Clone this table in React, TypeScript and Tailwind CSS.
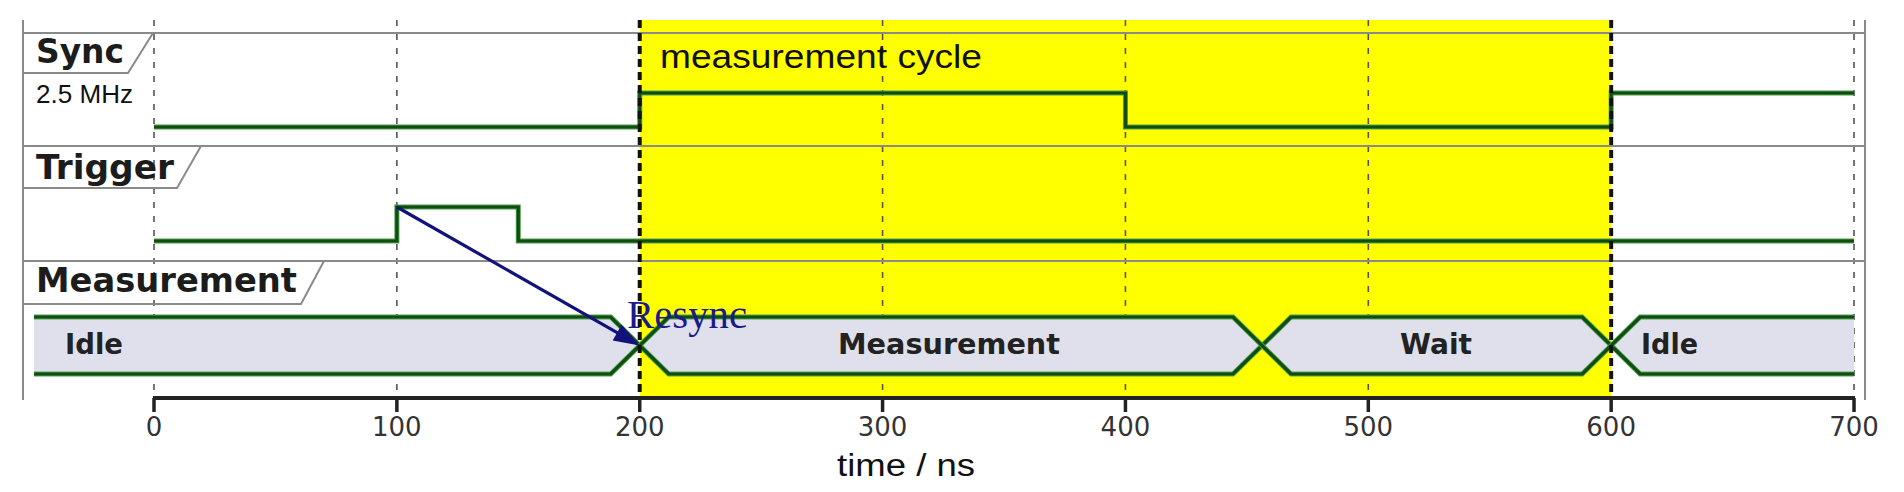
import React from "react";

// time (ns) -> x pixel
const X0 = 154;
const PX_PER_NS = 2.4286;
const tx = (t: number) => X0 + t * PX_PER_NS;

const GRID_THIN = [0, 100, 300, 400, 500, 700];
const GRID_BOLD = [200, 600];
const TICKS = [0, 100, 200, 300, 400, 500, 600, 700];

const ROW_LINES = [33, 146, 261];

const LABELS = [
  { text: "Sync", y: 33, bottom: 73, slantBottom: 128, slantTop: 153, baseline: 63, width: 88 },
  { text: "Trigger", y: 146, bottom: 188, slantBottom: 177, slantTop: 201, baseline: 179, width: 138 },
  { text: "Measurement", y: 261, bottom: 304, slantBottom: 301, slantTop: 324, baseline: 292, width: 261 },
];

// bus geometry
const BT = 317;
const BB = 374;
const BM = (BT + BB) / 2;
const H = 29;
const C1 = tx(200);
const C2 = 1262;
const C3 = tx(600);
const BUS_START = 34;
const BUS_END = tx(700);

const BUS_FILLS = [
  `${BUS_START},${BT} ${C1 - H},${BT} ${C1},${BM} ${C1 - H},${BB} ${BUS_START},${BB}`,
  `${C1},${BM} ${C1 + H},${BT} ${C2 - H},${BT} ${C2},${BM} ${C2 - H},${BB} ${C1 + H},${BB}`,
  `${C2},${BM} ${C2 + H},${BT} ${C3 - H},${BT} ${C3},${BM} ${C3 - H},${BB} ${C2 + H},${BB}`,
  `${C3},${BM} ${C3 + H},${BT} ${BUS_END},${BT} ${BUS_END},${BB} ${C3 + H},${BB}`,
];

const BUS_LINE_A = `${BUS_START},${BT} ${C1 - H},${BT} ${C1 + H},${BB} ${C2 - H},${BB} ${C2 + H},${BT} ${C3 - H},${BT} ${C3 + H},${BB} ${BUS_END},${BB}`;
const BUS_LINE_B = `${BUS_START},${BB} ${C1 - H},${BB} ${C1 + H},${BT} ${C2 - H},${BT} ${C2 + H},${BB} ${C3 - H},${BB} ${C3 + H},${BT} ${BUS_END},${BT}`;

const SYNC_HI = 93;
const SYNC_LO = 127;
const SYNC = `${tx(0)},${SYNC_LO} ${tx(200)},${SYNC_LO} ${tx(200)},${SYNC_HI} ${tx(400)},${SYNC_HI} ${tx(400)},${SYNC_LO} ${tx(600)},${SYNC_LO} ${tx(600)},${SYNC_HI} ${tx(700)},${SYNC_HI}`;

const TRG_HI = 207;
const TRG_LO = 241;
const TRIGGER = `${tx(0)},${TRG_LO} ${tx(100)},${TRG_LO} ${tx(100)},${TRG_HI} ${tx(150)},${TRG_HI} ${tx(150)},${TRG_LO} ${tx(700)},${TRG_LO}`;

const DEJAVU = "'DejaVu Sans', Verdana, sans-serif";
const ARIAL = "'Liberation Sans', Arial, sans-serif";
const TIMES = "'Liberation Serif', 'Times New Roman', serif";

function Wave({ points }: { points: string }) {
  return (
    <g fill="none" strokeLinejoin="miter">
      <polyline points={points} stroke="#4f9f4f" strokeWidth={5} />
      <polyline points={points} stroke="#104d10" strokeWidth={3.2} />
    </g>
  );
}

function Arrow() {
  const x1 = tx(100);
  const y1 = TRG_HI;
  const x2 = C1;
  const y2 = BM;
  const dx = x2 - x1;
  const dy = y2 - y1;
  const len = Math.hypot(dx, dy);
  const ux = dx / len;
  const uy = dy / len;
  const headLen = 26;
  const headW = 9;
  const bx = x2 - ux * headLen;
  const by = y2 - uy * headLen;
  const head = `${x2},${y2} ${bx - uy * headW},${by + ux * headW} ${bx + uy * headW},${by - ux * headW}`;
  return (
    <g>
      <line x1={x1} y1={y1} x2={bx + ux * 2} y2={by + uy * 2} stroke="#12127a" strokeWidth={3.2} />
      <polygon points={head} fill="#12127a" />
    </g>
  );
}

function TimingDiagram() {
  return (
    <svg width={1904} height={492} viewBox="0 0 1904 492" className="block">
      {/* measurement cycle window */}
      <rect x={C1} y={20} width={C3 - C1} height={378} fill="#ffff00" />

      {/* thin grid lines */}
      {GRID_THIN.map((t) => (
        <line key={t} x1={tx(t)} y1={20} x2={tx(t)} y2={396} stroke="#555" strokeWidth={1.6} strokeDasharray="6 8" />
      ))}

      {/* frame + row separators */}
      <line x1={23} y1={20} x2={23} y2={400} stroke="#8a8a8a" strokeWidth={2} />
      <line x1={1865} y1={20} x2={1865} y2={400} stroke="#8a8a8a" strokeWidth={2} />
      {ROW_LINES.map((y) => (
        <line key={y} x1={23} y1={y} x2={1865} y2={y} stroke="#8a8a8a" strokeWidth={2} />
      ))}

      {/* signal labels */}
      {LABELS.map((l) => (
        <g key={l.text}>
          <polyline
            points={`${23},${l.bottom} ${l.slantBottom},${l.bottom} ${l.slantTop},${l.y}`}
            fill="none"
            stroke="#8a8a8a"
            strokeWidth={2}
          />
          <text
            x={36}
            y={l.baseline}
            fontFamily={DEJAVU}
            fontWeight={700}
            fontSize={33}
            fill="#1c1c1c"
            textLength={l.width}
            lengthAdjust="spacingAndGlyphs"
          >
            {l.text}
          </text>
        </g>
      ))}
      <text x={36} y={103} fontFamily={ARIAL} fontSize={25} fill="#111" textLength={97} lengthAdjust="spacingAndGlyphs">
        2.5 MHz
      </text>

      <text x={660} y={68} fontFamily={ARIAL} fontSize={33} fill="#111" textLength={322} lengthAdjust="spacingAndGlyphs">
        measurement cycle
      </text>

      {/* waves */}
      <Wave points={SYNC} />
      <Wave points={TRIGGER} />

      {/* measurement bus */}
      {BUS_FILLS.map((p, i) => (
        <polygon key={i} points={p} fill="#e0e0ec" />
      ))}
      <Wave points={BUS_LINE_A} />
      <Wave points={BUS_LINE_B} />
      <g fontFamily={DEJAVU} fontWeight={700} fontSize={29} fill="#222">
        <text x={65} y={354} textLength={58} lengthAdjust="spacingAndGlyphs">Idle</text>
        <text x={838} y={354} textLength={222} lengthAdjust="spacingAndGlyphs">Measurement</text>
        <text x={1400} y={354} textLength={72} lengthAdjust="spacingAndGlyphs">Wait</text>
        <text x={1641} y={354} textLength={57} lengthAdjust="spacingAndGlyphs">Idle</text>
      </g>

      {/* bold cycle boundaries */}
      {GRID_BOLD.map((t) => (
        <line key={t} x1={tx(t)} y1={20} x2={tx(t)} y2={398} stroke="#111" strokeWidth={4} strokeDasharray="8 5" />
      ))}

      {/* resync arrow */}
      <Arrow />
      <text x={627} y={328} fontFamily={TIMES} fontSize={39} fill="#1a1a8a" textLength={120} lengthAdjust="spacingAndGlyphs">
        Resync
      </text>

      {/* time axis */}
      <line x1={tx(0) - 1} y1={398} x2={tx(700) + 1} y2={398} stroke="#222" strokeWidth={4} />
      {TICKS.map((t) => (
        <g key={t}>
          <line x1={tx(t)} y1={398} x2={tx(t)} y2={412} stroke="#222" strokeWidth={3.5} />
          <text x={tx(t)} y={436} textAnchor="middle" fontFamily={DEJAVU} fontSize={26} fill="#333">
            {t}
          </text>
        </g>
      ))}
      <text x={906} y={476} textAnchor="middle" fontFamily={ARIAL} fontSize={31} fill="#111" textLength={138} lengthAdjust="spacingAndGlyphs">
        time / ns
      </text>
    </svg>
  );
}

export default function App() {
  return (
    <div className="w-[1904px] h-[492px] bg-white overflow-hidden">
      <TimingDiagram />
    </div>
  );
}
